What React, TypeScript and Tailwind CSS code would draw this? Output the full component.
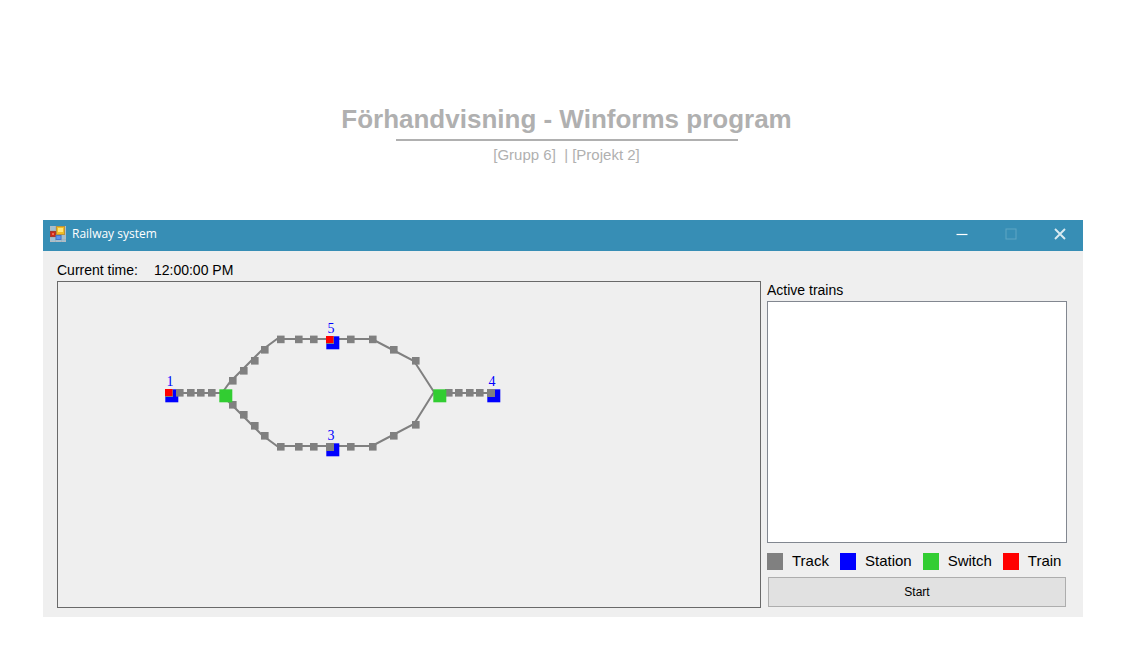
import React from "react";

type Point = [number, number];

const trackNodes: Point[] = [
  [180, 393], [191, 393], [201, 393], [212, 393],
  [233, 381], [244, 371], [255, 361], [265, 350], [281, 339], [299, 339], [314, 339],
  [351, 339], [373, 339], [394, 350], [416, 361],
  [233, 405], [244, 415], [255, 426], [265, 436], [281, 447], [299, 447], [314, 447],
  [351, 447], [373, 447], [394, 436], [416, 425],
  [449, 393], [459, 393], [470, 393], [480, 393],
];

const stations = [
  { name: "1", x: 165, y: 389, train: true },
  { name: "5", x: 326, y: 336, train: true },
  { name: "3", x: 326, y: 443, train: false },
  { name: "4", x: 487, y: 389, train: false },
];

const switches: Point[] = [[219, 389], [433, 389]];

const legend = [
  { label: "Track", color: "bg-[#808080]" },
  { label: "Station", color: "bg-[#0000ff]" },
  { label: "Switch", color: "bg-[#32cd32]" },
  { label: "Train", color: "bg-[#ff0000]" },
];

function RailwayMap() {
  return (
    <svg width="702" height="325" viewBox="58 282 702 325" className="block max-w-full" role="img" aria-label="Railway map">
      <g fill="none" stroke="#808080" strokeWidth="2">
        <path d="M169 393H222L230 382L262 350L277 339H372L391 349L414 361L434 392L414 424L391 436L372 446H277L262 435L222 395" />
        <path d="M434 393H491" />
      </g>
      {stations.map((s) => (
        <rect key={s.name} x={s.x + 0.3} y={s.y + 0.3} width="13" height="13" fill="#0000ff" />
      ))}
      {trackNodes.map(([x, y]) => (
        <rect key={`${x}-${y}`} x={x - 4} y={y - 4 + (y === 339 ? 0.6 : 0)} width="7.6" height="7.6" fill="#808080" />
      ))}
      {stations.map((s) => (
        <g key={s.name}>
          <rect x={s.x} y={s.y} width="8" height="8" fill="#808080" />
          {s.train && <rect x={s.x} y={s.y} width="7.4" height="7" fill="#ff0000" />}
          <text x={s.x + 5} y={s.y - 3} textAnchor="middle" fill="#0000ff" className="font-['Liberation_Serif',serif] text-[14px]">
            {s.name}
          </text>
        </g>
      ))}
      {switches.map(([x, y]) => (
        <rect key={x} x={x + 0.3} y={y + 0.3} width="13" height="13" fill="#32cd32" />
      ))}
    </svg>
  );
}

function FormIcon() {
  return (
    <svg width="16" height="16" viewBox="0 0 16 16" aria-hidden="true">
      <rect x="0.5" y="0.5" width="15" height="15" fill="#9fc0d2" stroke="#b4bcc2" />
      <path d="M0 4.5H6M0 11.5H6M5.5 0V16M11.5 9V16M6 13.5H16" stroke="#a3b3bd" />
      <rect x="6.5" y="0.5" width="8" height="8" fill="#f2bd22" stroke="#b9923a" />
      <rect x="8" y="2" width="5" height="4" fill="#ffe47a" />
      <rect x="0.5" y="5.5" width="5" height="5" fill="#cf2a18" stroke="#a5392f" />
      <rect x="2" y="7" width="2" height="2" fill="#ee6a55" />
      <rect x="6" y="9.5" width="5" height="4" fill="#5b93f0" stroke="#4478c8" />
    </svg>
  );
}

export default function App() {
  return (
    <main className="bg-white pt-[103px] pb-10 font-['Liberation_Sans',Arial,sans-serif] text-black">
      <header className="flex flex-col items-center pl-[10px] text-[#b0b0b0]">
        <h1 className="text-[26px] leading-8 font-bold">Förhandvisning - Winforms program</h1>
        <hr className="mt-1 w-[342px] border-0 border-t-2 border-[#b0b0b0]" />
        <p className="mt-1 text-[15px] leading-5 whitespace-pre">[Grupp 6]  | [Projekt 2]</p>
      </header>

      <section className="mt-[55px] mr-10 ml-[43px] bg-[#efefef]">
        <div className="flex h-[31px] items-center justify-between bg-[#378eb5] px-[7px] pb-[3px] text-white">
          <div className="flex items-center gap-[6px]">
            <FormIcon />
            <h2 className="font-['Open_Sans',sans-serif] text-[12px] leading-4">Railway system</h2>
          </div>
          <div className="flex items-center gap-[33px] pr-2">
            <button aria-label="Minimize" className="flex size-4 items-center justify-center">
              <svg width="12" height="12" viewBox="0 0 12 12"><path d="M0.5 6.5H11.5" stroke="white" strokeWidth="1.2" /></svg>
            </button>
            <button aria-label="Maximize" disabled className="flex size-4 items-center justify-center">
              <svg width="12" height="12" viewBox="0 0 12 12"><rect x="1" y="1" width="10" height="10" fill="none" stroke="#5fa5c4" /></svg>
            </button>
            <button aria-label="Close" className="flex size-4 items-center justify-center">
              <svg width="12" height="12" viewBox="0 0 12 12"><path d="M1 1L11 11M11 1L1 11" stroke="#d9eaf1" strokeWidth="1.9" /></svg>
            </button>
          </div>
        </div>

        <div className="flex gap-[6px] pt-[10px] pr-4 pb-[9px] pl-[14px]">
          <div className="flex min-w-0 flex-1 flex-col">
            <p className="flex gap-4 pb-[2px] text-[14px] leading-[18px]">
              <span>Current time:</span>
              <time>12:00:00 PM</time>
            </p>
            <div className="flex-1 border border-[#696969]">
              <RailwayMap />
            </div>
          </div>

          <div className="flex w-[300px] flex-col pt-5">
            <h3 id="active-trains" className="pb-[2px] text-[14px] leading-[18px]">Active trains</h3>
            <ul aria-labelledby="active-trains" className="h-[242px] border border-[#828790] bg-white" />
            <ul className="mt-2 flex gap-[11px] text-[15px] leading-5">
              {legend.map((item) => (
                <li key={item.label} className="flex items-center gap-[9px]">
                  <span className={`h-[17px] w-4 ${item.color}`} />
                  {item.label}
                </li>
              ))}
            </ul>
            <button className="mt-[6px] mr-px ml-px h-[30px] border border-[#adadad] bg-[#e1e1e1] text-[12px]">
              Start
            </button>
          </div>
        </div>
      </section>
    </main>
  );
}
